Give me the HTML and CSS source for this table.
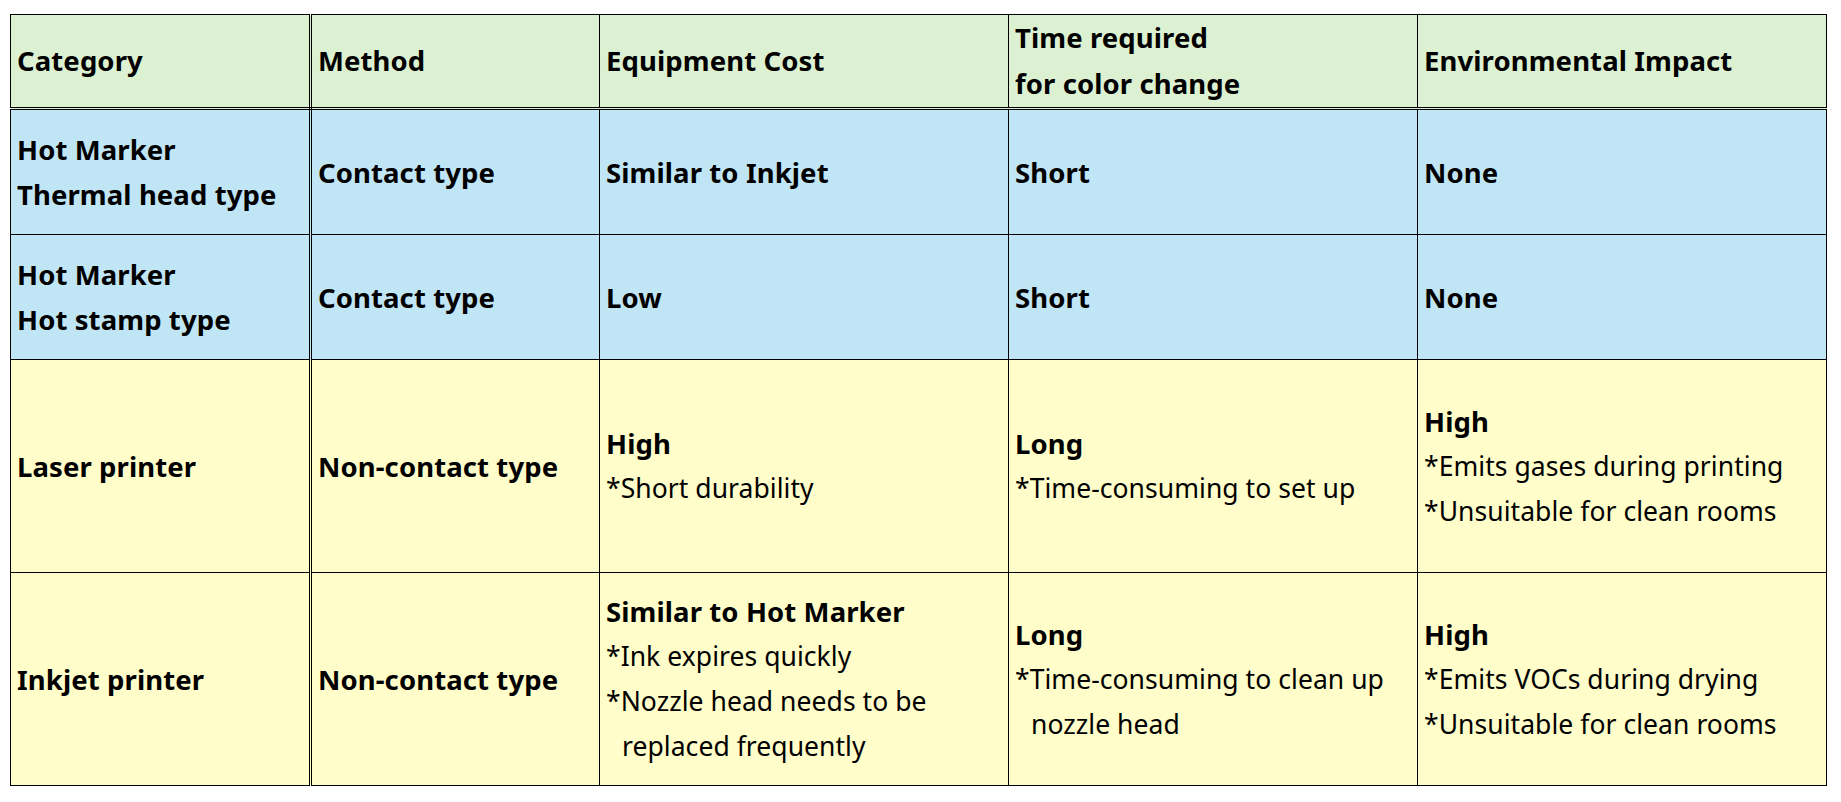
FILE: index.html
```html
<!DOCTYPE html>
<html lang="en">
<head>
<meta charset="utf-8">
<title>Comparison of marking methods</title>
<link rel="stylesheet" href="styles.css">
</head>
<body>
<table class="cmp">
  <colgroup>
    <col class="c1"><col class="c2"><col class="c3"><col class="c4"><col class="c5">
  </colgroup>
  <thead>
    <tr class="head">
      <th class="first">Category</th>
      <th>Method</th>
      <th>Equipment Cost</th>
      <th><div class="ln">Time required</div><div class="ln">for color change</div></th>
      <th>Environmental Impact</th>
    </tr>
  </thead>
  <tbody>
    <tr class="blue short">
      <td class="first"><div class="ln b">Hot Marker</div><div class="ln b">Thermal head type</div></td>
      <td><div class="ln b">Contact type</div></td>
      <td><div class="ln b">Similar to Inkjet</div></td>
      <td><div class="ln b">Short</div></td>
      <td><div class="ln b">None</div></td>
    </tr>
    <tr class="blue short">
      <td class="first"><div class="ln b">Hot Marker</div><div class="ln b">Hot stamp type</div></td>
      <td><div class="ln b">Contact type</div></td>
      <td><div class="ln b">Low</div></td>
      <td><div class="ln b">Short</div></td>
      <td><div class="ln b">None</div></td>
    </tr>
    <tr class="yellow tall">
      <td class="first"><div class="ln b">Laser printer</div></td>
      <td><div class="ln b">Non-contact type</div></td>
      <td><div class="ln b">High</div><div class="ln">*Short durability</div></td>
      <td><div class="ln b">Long</div><div class="ln">*Time-consuming to set up</div></td>
      <td><div class="ln b">High</div><div class="ln">*Emits gases during printing</div><div class="ln">*Unsuitable for clean rooms</div></td>
    </tr>
    <tr class="yellow tall">
      <td class="first"><div class="ln b">Inkjet printer</div></td>
      <td><div class="ln b">Non-contact type</div></td>
      <td><div class="ln b">Similar to Hot Marker</div><div class="ln">*Ink expires quickly</div><div class="ln">*Nozzle head needs to be</div><div class="ln cont">replaced frequently</div></td>
      <td><div class="ln b">Long</div><div class="ln">*Time-consuming to clean up</div><div class="ln cont">nozzle head</div></td>
      <td><div class="ln b">High</div><div class="ln">*Emits VOCs during drying</div><div class="ln">*Unsuitable for clean rooms</div></td>
    </tr>
  </tbody>
</table>
</body>
</html>
```
FILE: styles.css
```css
html, body {
  margin: 0;
  padding: 0;
  background: #ffffff;
}
body {
  padding: 14px 10px;
  font-family: "Noto Sans", "Noto Sans CJK JP", sans-serif;
  color: #000000;
}
.cmp {
  border-collapse: collapse;
  table-layout: fixed;
  width: 1816px;
}
.c1 { width: 300px; }
.c2 { width: 289px; }
.c3 { width: 409px; }
.c4 { width: 409px; }
.c5 { width: 409px; }
.cmp th,
.cmp td {
  border: 1px solid #000000;
  padding: 0 6px;
  text-align: left;
  vertical-align: middle;
  font-size: 26.5px;
  letter-spacing: 0.05px;
  line-height: 45px;
  white-space: nowrap;
}
.cmp th {
  font-weight: 700;
  font-size: 27.5px;
  letter-spacing: 0.1px;
}
.cmp .first {
  border-right: 3px double #000000;
}
.head th {
  background: #dcf1d1;
  border-bottom: 3px double #000000;
  height: 92px;
  line-height: 46px;
}
.blue td {
  background: #c0e5f5;
}
.yellow td {
  background: #fffdc9;
}
.short td { height: 124px; }
.tall td { height: 212px; }
.ln { display: block; }
.b {
  font-weight: 700;
  font-size: 27.5px;
  letter-spacing: 0.1px;
}
.ln.cont { padding-left: 16px; }
```
